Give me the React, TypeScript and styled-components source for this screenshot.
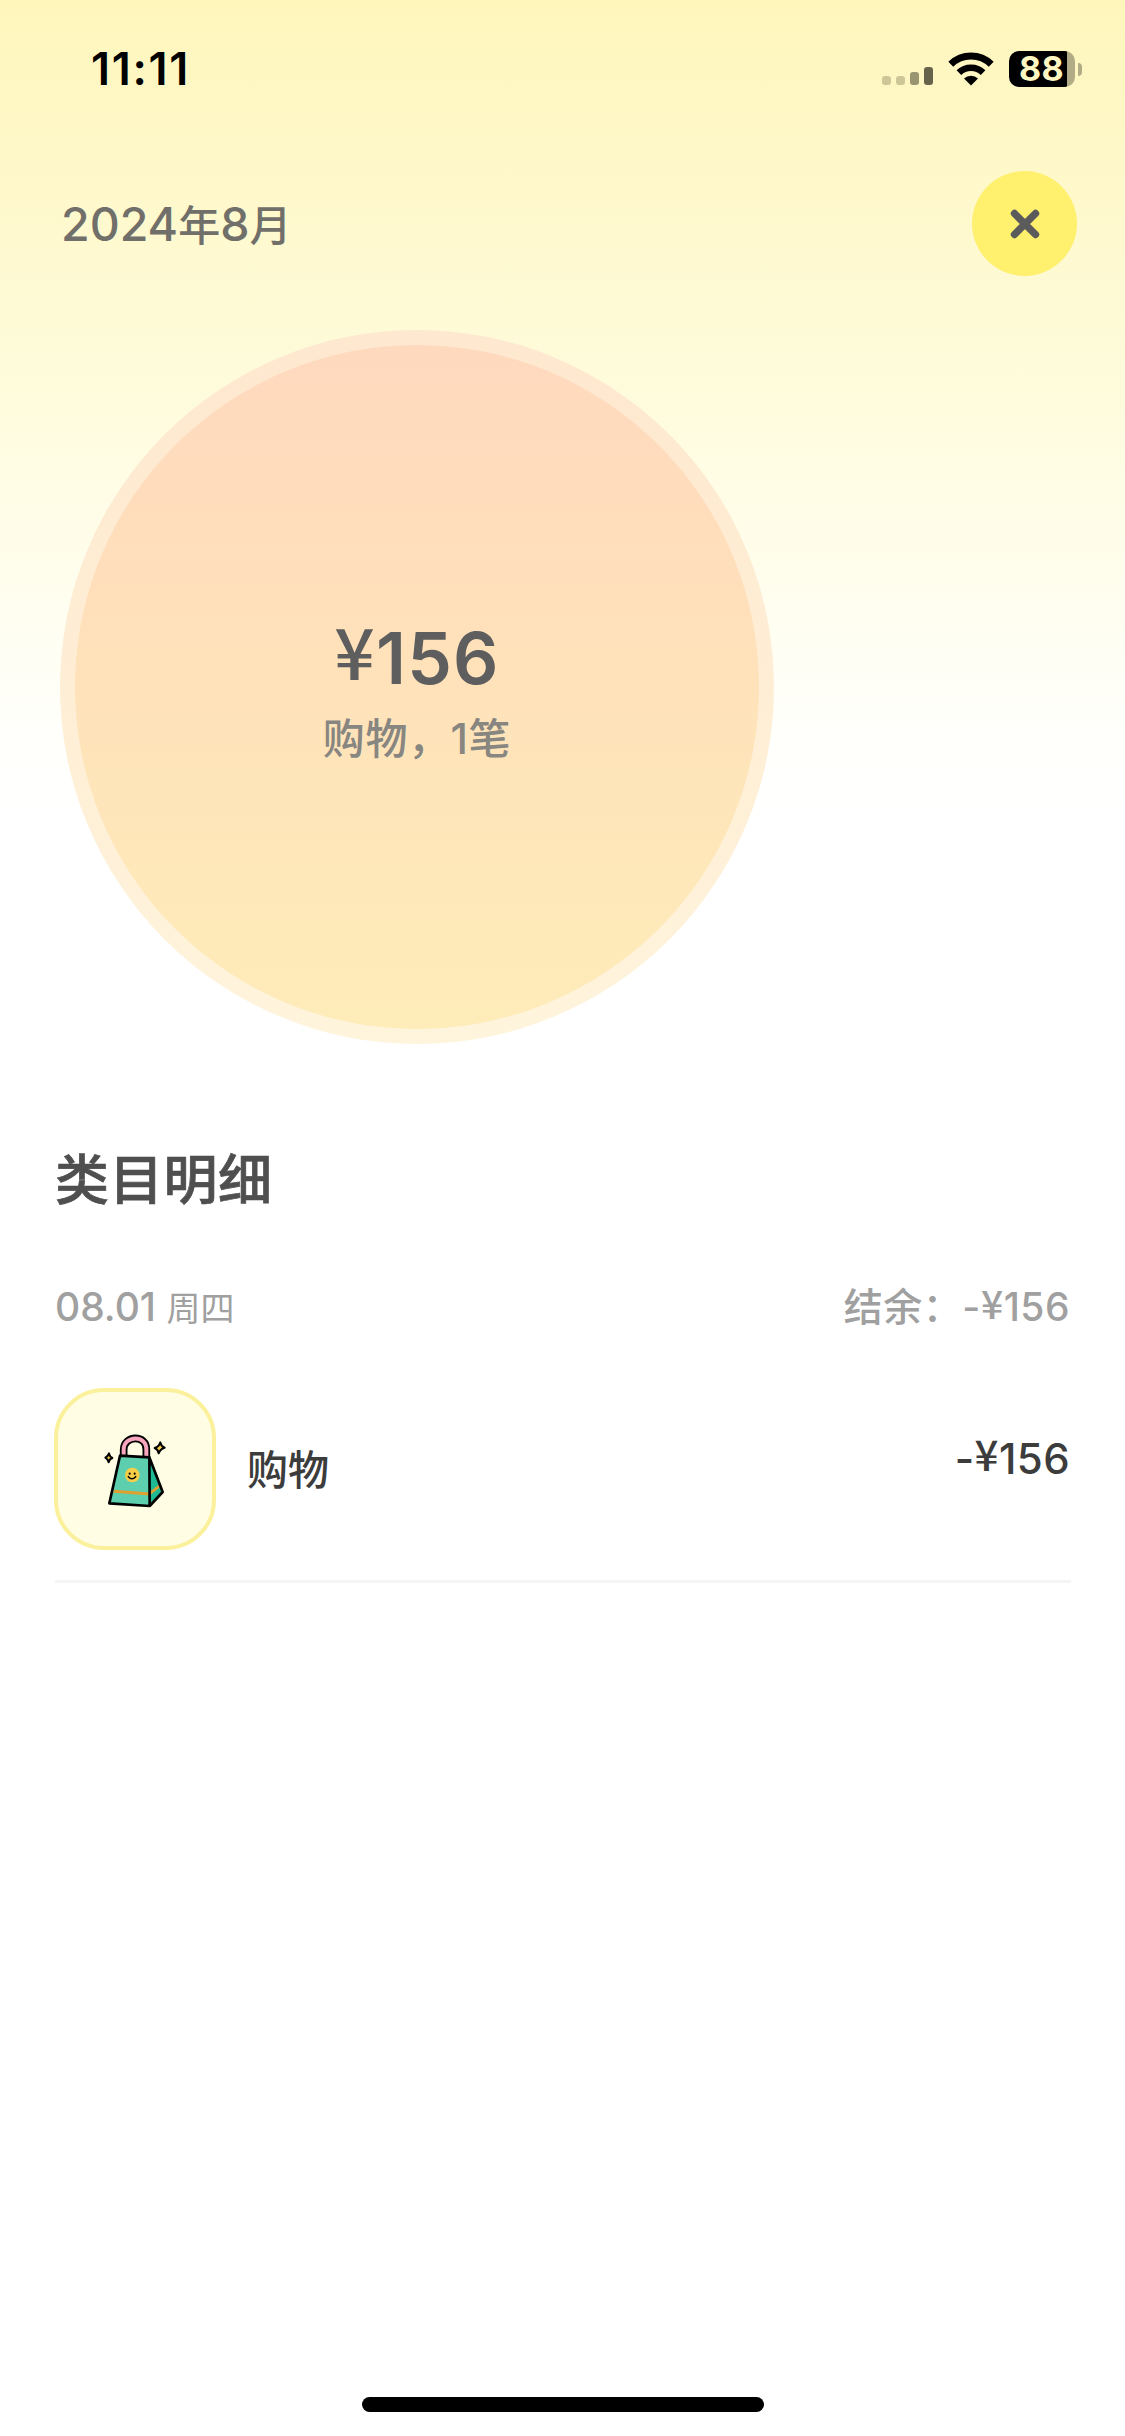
import React from "react";
import styled, { createGlobalStyle } from "styled-components";

const GlobalStyle = createGlobalStyle`
  *, *::before, *::after { box-sizing: border-box; }
  body {
    margin: 0;
    background: #fff;
    font-family: Inter, "Noto Sans CJK SC", sans-serif;
    -webkit-font-smoothing: antialiased;
  }
`;

const Screen = styled.div`
  width: 1125px;
  height: 2436px;
  display: flex;
  flex-direction: column;
  background: linear-gradient(180deg, #fff6bc 0px, #fefad5 310px, #fffde6 500px, #fffffb 730px, #fff 820px);
`;

const StatusBar = styled.header`
  height: 138px;
  padding: 0 43px 0 91px;
  display: flex;
  justify-content: space-between;
`;

const Clock = styled.div`
  height: 138px;
  line-height: 138px;
  font-size: 45px;
  font-weight: 600;
  letter-spacing: 1.7px;
  color: #000;
`;

const StatusIcons = styled.div`
  height: 138px;
  display: flex;
  align-items: center;
`;

const Signal = styled.div`
  display: flex;
  align-items: flex-end;
  gap: 5px;
  height: 32px;
  margin-right: 15px;
`;

const Bar = styled.i<{ $h: number; $color: string }>`
  width: 9px;
  height: ${(p) => p.$h}px;
  border-radius: 3px;
  background: ${(p) => p.$color};
`;

const WifiIcon = styled.svg`
  width: 46px;
  height: 34px;
  margin-right: 15px;
`;

const Battery = styled.div`
  width: 66px;
  height: 36px;
  border-radius: 10px;
  background: linear-gradient(90deg, #000 58px, #b1ac85 58px);
  color: #fff7c2;
  font-size: 34px;
  line-height: 36px;
  font-weight: 650;
  letter-spacing: 0.4px;
  text-align: center;
  padding-right: 1px;
`;

const BatteryNub = styled.i`
  width: 4px;
  height: 13px;
  margin-left: 3px;
  border-radius: 0 4px 4px 0;
  background: #b1ac85;
`;

const Header = styled.div`
  height: 171px;
  padding: 33px 48px 0 61px;
  display: flex;
  justify-content: space-between;
`;

const Month = styled.h1`
  margin: 0;
  height: 105px;
  line-height: 106px;
  font-size: 46.5px;
  font-weight: 500;
  color: #716f6a;
`;

const MonthUnit = styled.span`
  font-size: 42px;
`;

const CloseButton = styled.button`
  width: 105px;
  height: 105px;
  padding: 0;
  border: 0;
  border-radius: 50%;
  background: #fff06e;
  display: flex;
  align-items: center;
  justify-content: center;
`;

const Bubble = styled.section`
  width: 714px;
  height: 714px;
  margin: 21px 0 0 60px;
  padding: 15px;
  flex: none;
  border-radius: 50%;
  background: linear-gradient(180deg, #fee8cf, #fff4dc);
`;

const BubbleCore = styled.div`
  height: 684px;
  border-radius: 50%;
  background: linear-gradient(180deg, #ffd9be, #ffe1ba 45%, #feecb9);
  display: flex;
  flex-direction: column;
  align-items: center;
  padding-top: 265px;
`;

const Total = styled.div`
  height: 96px;
  line-height: 96px;
  font-size: 71px;
  font-weight: 600;
  letter-spacing: 1.2px;
  color: #5e5e5e;
`;

const TotalCaption = styled.div`
  height: 60px;
  line-height: 60px;
  margin-top: 3px;
  font-size: 42px;
  font-weight: 500;
  letter-spacing: 0.6px;
  color: #888680;
`;

const Yen = styled.span`
  display: inline-block;
  line-height: 1;
  font-family: "Noto Sans CJK SC", sans-serif;
  font-weight: 500;
  transform: translateY(-0.06em);
`;

const Details = styled.section`
  padding: 101px 54px 0 55px;
  flex: 1;
`;

const SectionTitle = styled.h2`
  margin: 0;
  height: 72px;
  line-height: 72px;
  font-size: 54px;
  font-weight: 500;
  letter-spacing: 0.3px;
  -webkit-text-stroke: 0.7px #4f4f4f;
  color: #4f4f4f;
`;

const DayRow = styled.div`
  height: 60px;
  margin-top: 60px;
  padding-right: 1px;
  display: flex;
  justify-content: space-between;
  line-height: 60px;
  color: #a0a0a0;
`;

const Day = styled.span`
  font-size: 39px;
  font-weight: 450;
`;

const Weekday = styled.span`
  font-size: 34px;
  font-weight: 400;
`;

const Balance = styled.span`
  font-size: 39px;
  font-weight: 450;
  line-height: 60px;
  letter-spacing: 0.5px;
`;

const Entry = styled.div`
  margin-top: 51px;
  height: 195px;
  display: flex;
  border-bottom: 3px solid #f5f5f5;
  font-size: 42px;
  color: #3c3c3c;
`;

const CategoryIcon = styled.div`
  width: 162px;
  height: 162px;
  margin-left: -1px;
  border: 4px solid #fbf09c;
  border-radius: 50px;
  background: #fffde4;
  display: flex;
  justify-content: center;
  align-items: center;
`;

const BagArt = styled.svg`
  width: 80px;
  height: 85px;
`;

const CategoryName = styled.div`
  height: 162px;
  line-height: 164px;
  margin-left: 31px;
  font-size: 41px;
  font-weight: 500;
`;

const Amount = styled.div`
  height: 60px;
  line-height: 60px;
  margin: 41px 1px 0 auto;
  font-weight: 500;
  letter-spacing: 0.4px;
`;

const HomeIndicator = styled.div`
  width: 402px;
  height: 15px;
  margin: 0 0 24px 362px;
  border-radius: 8px;
  background: #000;
`;

const Wifi = () => (
  <WifiIcon viewBox="0 0 46 34">
    <path d="M2.8 12.3A29 29 0 0 1 43.2 12.3" fill="none" stroke="#000" strokeWidth="7" />
    <path d="M10.9 20.6A17.4 17.4 0 0 1 35.1 20.6" fill="none" stroke="#000" strokeWidth="6.6" />
    <path d="M23 33.5L16 26.6A10 10 0 0 1 30 26.6Z" fill="#000" />
  </WifiIcon>
);

const Bag = () => (
  <BagArt viewBox="0 0 240 255" strokeLinejoin="round">
    <path d="M86 90V68C86 24 156 22 154 68V92" fill="none" stroke="#000" strokeWidth="23" />
    <path d="M86 90V68C86 24 156 22 154 68V92" fill="none" stroke="#f7a6bd" strokeWidth="12" />
    <path d="M75 86L163 91L164 237L43 229Z" fill="#5dcfae" />
    <path d="M163 91L203 195L164 237Z" fill="#1fba94" />
    <path d="M56 193L164 201" fill="none" stroke="#dfa02f" strokeWidth="9" />
    <path d="M164 200L195 176" fill="none" stroke="#dfa02f" strokeWidth="8" />
    <path d="M75 86L163 91L164 237L43 229ZM163 91L203 195L164 237" fill="none" stroke="#000" strokeWidth="8" />
    <circle cx="112" cy="144" r="22" fill="#f6ce48" />
    <path d="M100 149Q111 162 122 149" fill="none" stroke="#000" strokeWidth="4.5" strokeLinecap="round" />
    <circle cx="104" cy="140" r="3.2" fill="#000" />
    <circle cx="119" cy="140" r="3.2" fill="#000" />
    <path d="M196 46Q198 58 209 62Q196 65 191 79Q189 67 179 63Q192 59 196 46Z" fill="#f6ce48" stroke="#000" strokeWidth="6" />
    <path d="M42 79Q44 89 52 93Q43 96 41 106Q38 96 31 92Q39 88 42 79Z" fill="#f6ce48" stroke="#000" strokeWidth="6" />
  </BagArt>
);

export default function App() {
  return (
    <>
      <GlobalStyle />
      <Screen>
        <StatusBar>
          <Clock>11:11</Clock>
          <StatusIcons>
            <Signal>
              <Bar $h={9} $color="#cdc797" />
              <Bar $h={9} $color="#cdc797" />
              <Bar $h={13} $color="#999571" />
              <Bar $h={18} $color="#66634b" />
            </Signal>
            <Wifi />
            <Battery>88</Battery>
            <BatteryNub />
          </StatusIcons>
        </StatusBar>
        <Header>
          <Month>
            2024<MonthUnit>年</MonthUnit>8<MonthUnit>月</MonthUnit>
          </Month>
          <CloseButton aria-label="关闭">
            <svg width="30" height="30" viewBox="0 0 30 30">
              <path d="M4.5 4.5L25.5 25.5M25.5 4.5L4.5 25.5" stroke="#5c5b5b" strokeWidth="7.4" strokeLinecap="round" />
            </svg>
          </CloseButton>
        </Header>
        <Bubble>
          <BubbleCore>
            <Total><Yen>¥</Yen>156</Total>
            <TotalCaption>购物，1笔</TotalCaption>
          </BubbleCore>
        </Bubble>
        <Details>
          <SectionTitle>类目明细</SectionTitle>
          <DayRow>
            <Day>08.01 <Weekday>周四</Weekday></Day>
            <Balance>结余：-<Yen>¥</Yen>156</Balance>
          </DayRow>
          <Entry>
            <CategoryIcon><Bag /></CategoryIcon>
            <CategoryName>购物</CategoryName>
            <Amount>-<Yen>¥</Yen>156</Amount>
          </Entry>
        </Details>
        <HomeIndicator />
      </Screen>
    </>
  );
}
